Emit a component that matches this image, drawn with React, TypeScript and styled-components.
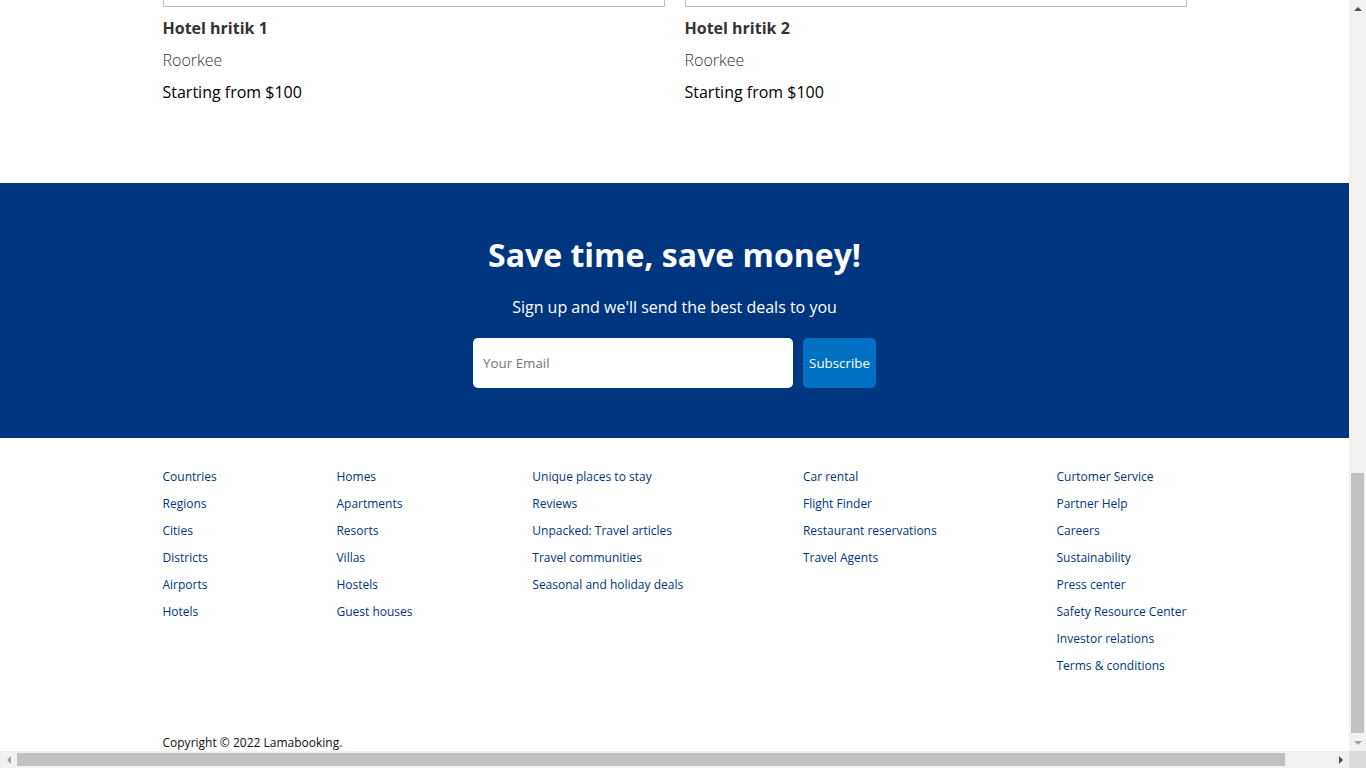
import React from "react";
import styled, { createGlobalStyle } from "styled-components";

const GlobalStyle = createGlobalStyle`
  html, body {
    margin: 0;
    padding: 0;
    overflow: hidden;
  }
  body {
    font-family: "Open Sans", "Liberation Sans", sans-serif;
    color: #000;
    background: #fff;
  }
`;

/* ---------- Window frame with classic scrollbars ---------- */
const Frame = styled.div`
  width: 100vw;
  height: 100vh;
  display: grid;
  grid-template-columns: 1fr 17px;
  grid-template-rows: 1fr 17px;
`;

const Viewport = styled.div`
  overflow: hidden;
  display: flex;
  flex-direction: column;
  justify-content: flex-end;
  min-width: 0;
  min-height: 0;
`;

const VScroll = styled.div`
  background: #f1f1f1;
  display: flex;
  flex-direction: column;
`;

const HScroll = styled.div`
  background: #f1f1f1;
  display: flex;
  flex-direction: row;
`;

const Corner = styled.div`
  background: #dcdcdc;
`;

const ArrowBox = styled.div`
  flex: 0 0 17px;
  width: 17px;
  height: 17px;
  display: flex;
  align-items: center;
  justify-content: center;
`;

type Dir = "up" | "down" | "left" | "right";

const Triangle = styled.span<{ $dir: Dir; $enabled?: boolean }>`
  width: 0;
  height: 0;
  ${(p) => {
    const c = p.$enabled ? "#505050" : "#a3a3a3";
    switch (p.$dir) {
      case "up":
        return `border-left: 4px solid transparent; border-right: 4px solid transparent; border-bottom: 4px solid ${c};`;
      case "down":
        return `border-left: 4px solid transparent; border-right: 4px solid transparent; border-top: 4px solid ${c};`;
      case "left":
        return `border-top: 4px solid transparent; border-bottom: 4px solid transparent; border-right: 4px solid ${c};`;
      default:
        return `border-top: 4px solid transparent; border-bottom: 4px solid transparent; border-left: 4px solid ${c};`;
    }
  }}
`;

const VTrack = styled.div`
  flex: 1;
  display: flex;
  flex-direction: column;
  justify-content: flex-end;
  padding: 0 2px 1px;
`;

const VThumb = styled.div`
  height: 260px;
  background: #c1c1c1;
`;

const HTrack = styled.div`
  flex: 1;
  display: flex;
  flex-direction: row;
  justify-content: flex-start;
  padding: 2px 0;
`;

const HThumb = styled.div`
  width: 1268px;
  background: #c1c1c1;
`;

/* ---------- Page ---------- */
const Home = styled.main`
  display: flex;
  flex-direction: column;
  align-items: center;
  gap: 30px;
  flex-shrink: 0;
`;

const FP = styled.section`
  width: 100%;
  max-width: 1024px;
  display: flex;
  justify-content: space-between;
  gap: 20px;
`;

const FPItem = styled.div`
  flex: 1;
  display: flex;
  flex-direction: column;
  gap: 10px;
`;

const FPImg = styled.div`
  height: 250px;
  box-sizing: border-box;
  border: 1px solid #c0c0c0;
`;

const FPName = styled.span`
  font-size: 16px;
  line-height: 22px;
  color: #333;
  font-weight: bold;
`;

const FPCity = styled.span`
  font-size: 16px;
  line-height: 22px;
  font-weight: 300;
  color: #333;
`;

const FPPrice = styled.span`
  font-size: 16px;
  line-height: 22px;
  font-weight: 500;
`;

const Mail = styled.section`
  width: 100%;
  margin-top: 50px;
  background-color: #003580;
  color: #fff;
  display: flex;
  flex-direction: column;
  align-items: center;
  gap: 20px;
  padding: 50px;
`;

const MailTitle = styled.h1`
  margin: 0;
  font-size: 32px;
  line-height: 43px;
  font-weight: bold;
`;

const MailDesc = styled.span`
  font-size: 16px;
  line-height: 22px;
`;

const MailInputContainer = styled.div`
  display: flex;
`;

const MailInput = styled.input`
  width: 300px;
  height: 30px;
  padding: 10px;
  border: none;
  margin-right: 10px;
  border-radius: 5px;
  font-family: "Open Sans", "Liberation Sans", sans-serif;
  font-size: 13.33px;
  outline: none;
  &::placeholder {
    color: #757575;
  }
`;

const MailButton = styled.button`
  height: 50px;
  padding: 1px 6px;
  background-color: #0071c2;
  color: #fff;
  font-weight: 500;
  border: none;
  border-radius: 5px;
  cursor: pointer;
  font-family: "Open Sans", "Liberation Sans", sans-serif;
  font-size: 13.33px;
`;

const Footer = styled.footer`
  width: 100%;
  max-width: 1024px;
  font-size: 12px;
  line-height: 17px;
`;

const FLists = styled.div`
  width: 100%;
  display: flex;
  justify-content: space-between;
  margin-bottom: 50px;
`;

const FList = styled.ul`
  list-style: none;
  padding: 0;
  margin: 0;
`;

const FListItem = styled.li`
  margin-bottom: 10px;
  color: #003580;
  cursor: pointer;
`;

const FText = styled.div`
  color: #111;
`;

const footerColumns: string[][] = [
  ["Countries", "Regions", "Cities", "Districts", "Airports", "Hotels"],
  ["Homes", "Apartments", "Resorts", "Villas", "Hostels", "Guest houses"],
  [
    "Unique places to stay",
    "Reviews",
    "Unpacked: Travel articles",
    "Travel communities",
    "Seasonal and holiday deals",
  ],
  ["Car rental", "Flight Finder", "Restaurant reservations", "Travel Agents"],
  [
    "Curtomer Service",
    "Partner Help",
    "Careers",
    "Sustainability",
    "Press center",
    "Safety Resource Center",
    "Investor relations",
    "Terms & conditions",
  ],
];

const hotels = [
  { name: "Hotel hritik 1", city: "Roorkee", price: 100 },
  { name: "Hotel hritik 2", city: "Roorkee", price: 100 },
];

export default function App() {
  return (
    <>
      <GlobalStyle />
      <Frame>
        <Viewport>
          <Home>
            <FP>
              {hotels.map((h) => (
                <FPItem key={h.name}>
                  <FPImg />
                  <FPName>{h.name}</FPName>
                  <FPCity>{h.city}</FPCity>
                  <FPPrice>Starting from ${h.price}</FPPrice>
                </FPItem>
              ))}
            </FP>
            <Mail>
              <MailTitle>Save time, save money!</MailTitle>
              <MailDesc>Sign up and we'll send the best deals to you</MailDesc>
              <MailInputContainer>
                <MailInput type="text" placeholder="Your Email" />
                <MailButton>Subscribe</MailButton>
              </MailInputContainer>
            </Mail>
            <Footer>
              <FLists>
                {footerColumns.map((col, i) => (
                  <FList key={i}>
                    {col.map((item) => (
                      <FListItem key={item}>{item}</FListItem>
                    ))}
                  </FList>
                ))}
              </FLists>
              <FText>Copyright © 2022 Lamabooking.</FText>
            </Footer>
          </Home>
        </Viewport>
        <VScroll>
          <ArrowBox>
            <Triangle $dir="up" $enabled />
          </ArrowBox>
          <VTrack>
            <VThumb />
          </VTrack>
          <ArrowBox>
            <Triangle $dir="down" />
          </ArrowBox>
        </VScroll>
        <HScroll>
          <ArrowBox>
            <Triangle $dir="left" />
          </ArrowBox>
          <HTrack>
            <HThumb />
          </HTrack>
          <ArrowBox>
            <Triangle $dir="right" $enabled />
          </ArrowBox>
        </HScroll>
        <Corner />
      </Frame>
    </>
  );
}
